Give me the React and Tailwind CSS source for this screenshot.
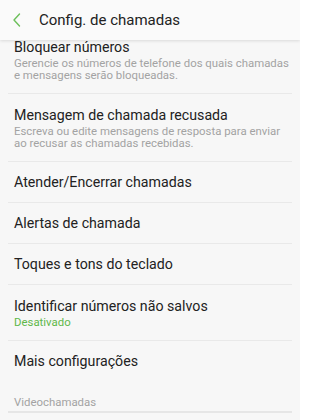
import React from "react";

function Row({ title, sub, status, border = true }) {
  const two = sub || status;
  return (
    <div className={`mx-[8px] pl-[6px] ${two ? "pt-[11px] pb-[12px]" : "pt-[10px] pb-[10px]"} ${border ? "border-b border-[#e9e9e9]" : ""}`}>
      <div className="text-[14.2px] leading-[20px] text-[#222222]">{title}</div>
      {sub && (
        <div className="text-[11.4px] leading-[12px] text-[#a3a3a3]">{sub}</div>
      )}
      {status && (
        <div className="text-[11.4px] leading-[12px] text-[#5fb84a]">{status}</div>
      )}
    </div>
  );
}

export default function App() {
  return (
    <div
      className="w-[300px] h-[420px] overflow-hidden bg-[#f7f7f7]"
      style={{ fontFamily: "Roboto, 'Noto Sans', sans-serif" }}
    >
      <div className="relative z-10 h-[40px] bg-[#fafafa] flex items-center shadow-[0_1px_3px_rgba(0,0,0,0.12)]">
        <svg width="10" height="16" viewBox="0 0 10 16" className="ml-[12px]">
          <path d="M7.5 2 L2 8 L7.5 14" fill="none" stroke="#6cbf5a" strokeWidth="1.4" strokeLinecap="round" strokeLinejoin="round" />
        </svg>
        <div className="ml-[17px] text-[15px] text-[#222222]">Config. de chamadas</div>
      </div>
      <div className="mt-[-14px]">
        <Row
          title="Bloquear números"
          sub="Gerencie os números de telefone dos quais chamadas e mensagens serão bloqueadas."
        />
        <Row
          title="Mensagem de chamada recusada"
          sub="Escreva ou edite mensagens de resposta para enviar ao recusar as chamadas recebidas."
        />
        <Row title="Atender/Encerrar chamadas" />
        <Row title="Alertas de chamada" />
        <Row title="Toques e tons do teclado" />
        <Row title="Identificar números não salvos" status="Desativado" />
        <Row title="Mais configurações" border={false} />
        <div className="mx-[8px] px-[6px] pt-[14px] pb-[2px] border-b-2 border-[#e6e6e6]">
          <div className="text-[11.4px] leading-[14px] text-[#a3a3a3]">Videochamadas</div>
        </div>
      </div>
    </div>
  );
}
